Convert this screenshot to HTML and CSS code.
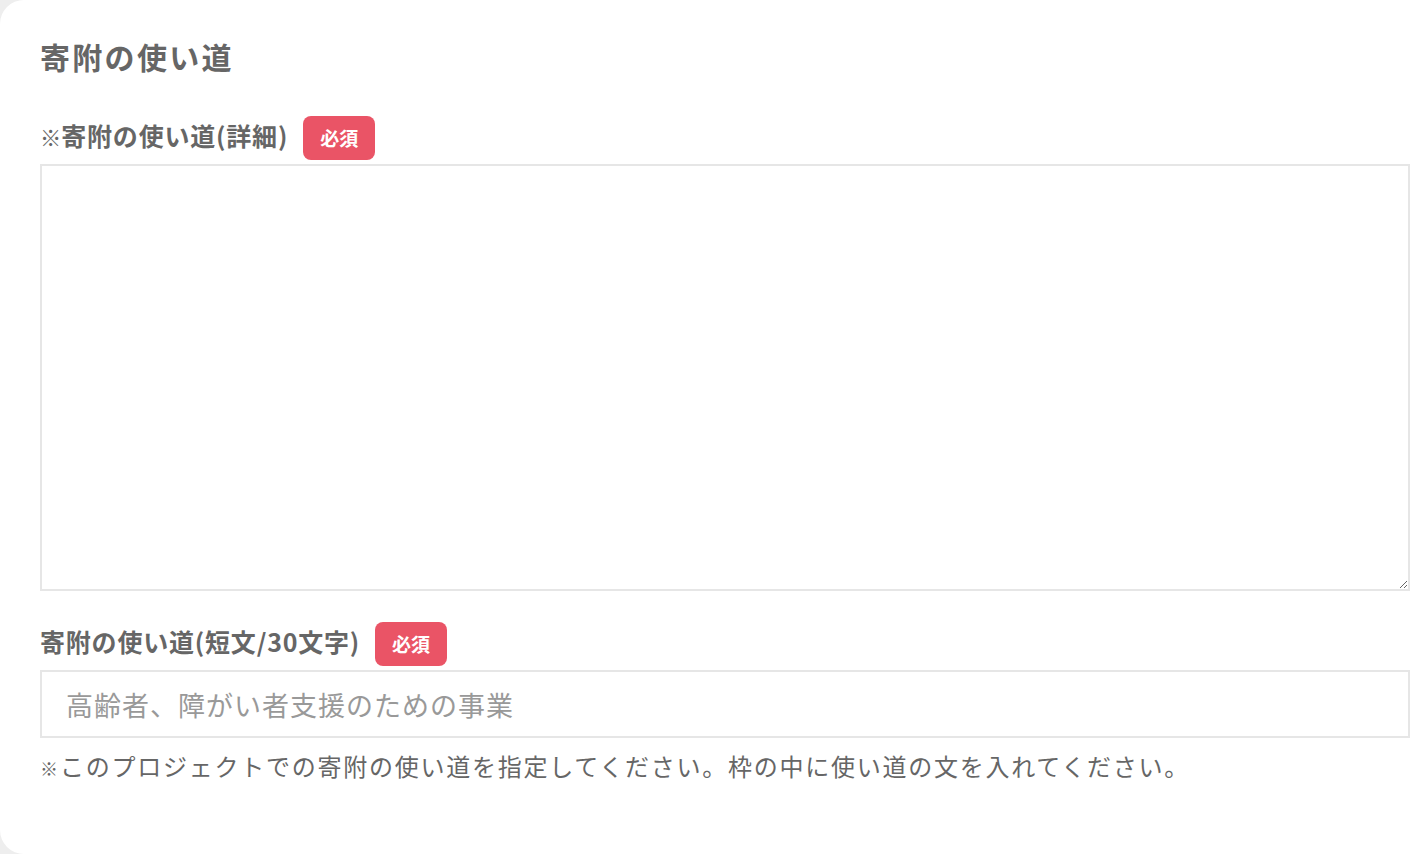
FILE: index.html
```html
<!DOCTYPE html>
<html lang="ja">
<head>
    <meta charset="UTF-8">
    <meta name="viewport" content="width=device-width, initial-scale=1.0">
    <title>寄附の使い道</title>
    <link rel="stylesheet" href="styles.css">
</head>
<body>
    <div class="card">
        <h2 class="section-title">寄附の使い道</h2>

        <div class="field">
            <div class="field-label">
                <span class="label-text"><span class="mark">※</span>寄附の使い道(詳細)</span>
                <span class="required">必須</span>
            </div>
            <textarea class="detail-input"></textarea>
        </div>

        <div class="field">
            <div class="field-label">
                <span class="label-text">寄附の使い道(短文/30文字)</span>
                <span class="required">必須</span>
            </div>
            <input type="text" class="short-input" placeholder="高齢者、障がい者支援のための事業">
            <p class="note"><span class="mark">※</span>このプロジェクトでの寄附の使い道を指定してください。枠の中に使い道の文を入れてください。</p>
        </div>
    </div>
</body>
</html>
```

FILE: styles.css
```css
body {
    margin: 0;
    background-color: #eeeeee;
    font-family: "Noto Sans CJK JP", "Noto Sans", sans-serif;
    color: #666666;
    overflow: hidden;
}

.card {
    width: 1460px;
    height: 854px;
    box-sizing: border-box;
    padding: 32px 50px 0 40px;
    background-color: #ffffff;
    border-radius: 24px;
}

.section-title {
    margin: 0 0 36px;
    font-size: 30px;
    line-height: 48px;
    letter-spacing: 2.3px;
    font-weight: bold;
}

.field {
    width: 1370px;
}

.field-label {
    display: flex;
    align-items: center;
    gap: 15px;
    margin-bottom: 4px;
    font-size: 25px;
    font-weight: bold;
    letter-spacing: 0.8px;
}

.label-text {
    padding-bottom: 6px;
}

.label-text .mark {
    font-size: 0.85em;
    margin-right: 0;
}

.mark {
    font-size: 0.75em;
    letter-spacing: 0;
    margin-right: 2px;
}

.required {
    display: inline-block;
    width: 72px;
    height: 44px;
    line-height: 44px;
    text-align: center;
    border-radius: 8px;
    background-color: #ea5466;
    color: #ffffff;
    font-size: 19px;
    letter-spacing: 0;
}

.detail-input {
    display: block;
    width: 100%;
    height: 427px;
    box-sizing: border-box;
    margin: 0 0 31px;
    border: 2px solid #e6e6e6;
    font-family: inherit;
    font-size: 26px;
    outline: none;
}

.short-input {
    display: block;
    width: 100%;
    height: 68px;
    box-sizing: border-box;
    padding: 0 24px;
    border: 2px solid #e6e6e6;
    font-family: inherit;
    font-size: 27px;
    letter-spacing: 1px;
    color: #666666;
    outline: none;
}

.short-input::placeholder {
    color: #999999;
}

.note {
    margin: 10px 0 0;
    font-size: 24px;
    line-height: 36px;
    letter-spacing: 1.75px;
}
```
